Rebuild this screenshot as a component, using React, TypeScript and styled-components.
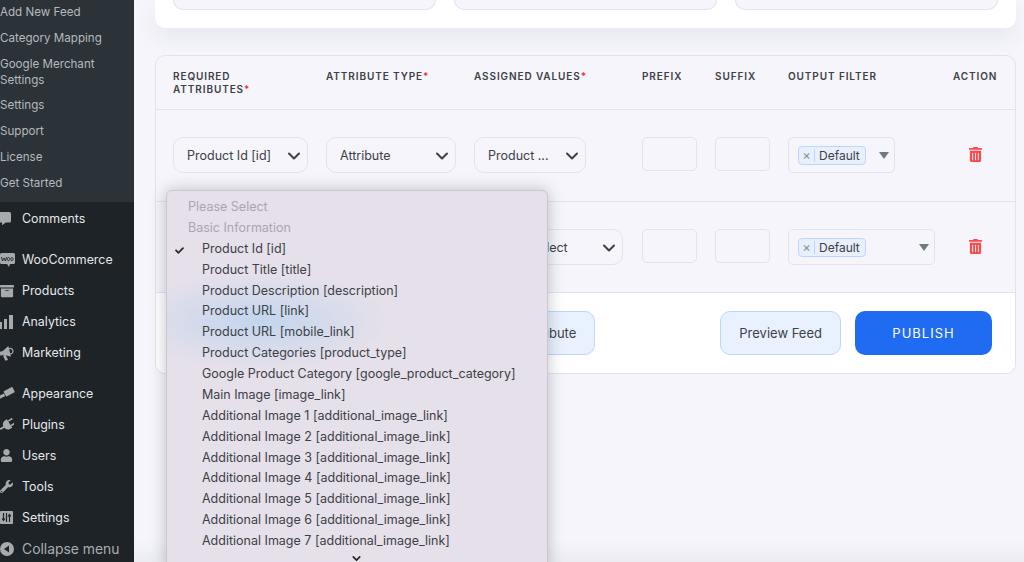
import React from 'react'
import styled, { createGlobalStyle } from 'styled-components'
import { FaTrashAlt, FaCommentAlt, FaArchive, FaUser, FaWrench, FaCheck } from 'react-icons/fa'
import { FiChevronDown } from 'react-icons/fi'

const GlobalStyle = createGlobalStyle`
  html, body { margin: 0; padding: 0; height: 100%; overflow: hidden; }
  body { font-family: Inter, "Noto Sans", sans-serif; background: #f5f5fb; color: #3d4146; }
  * { box-sizing: border-box; }
`

const subItems = ['Add New Feed', 'Category Mapping', 'Google Merchant Settings', 'Settings', 'Support', 'License', 'Get Started']

const BarsIcon = () => (
  <svg width="14" height="14" viewBox="0 0 14 14" fill="currentColor">
    <rect x="0" y="7" width="2" height="7" />
    <rect x="4" y="4" width="3" height="10" />
    <rect x="9" y="0" width="4" height="14" />
  </svg>
)

const WooIcon = () => (
  <svg width="15" height="16" viewBox="0 0 15 16" fill="currentColor">
    <path d="M1.500 1h12A1.500 1.500 0 0 1 15 2.500v8a1.500 1.500 0 0 1-1.500 1.500H10L9 15l-2-3H1.500A1.500 1.500 0 0 1 0 10.500v-8A1.500 1.500 0 0 1 1.500 1z" />
    <path d="M1.500 5l1 4 1.500-3 1.500 3 1-4M8.500 5.500a1.200 1.600 0 1 0 .01 0M12 5.500a1.200 1.600 0 1 0 .01 0" fill="none" stroke="#1d2327" strokeWidth=".9" />
  </svg>
)

const MegaphoneIcon = () => (
  <svg width="14" height="16" viewBox="0 0 14 16" fill="currentColor">
    <g transform="rotate(-14 7 8)">
      <path d="M0 5h3.500L10 1.500v11L3.500 9H0z" />
      <path d="M2.500 9.500h2.800l1 5.500H3.500z" />
      <circle cx="10.500" cy="7" r="2.800" fill="none" stroke="currentColor" strokeWidth="1.200" />
    </g>
  </svg>
)

const RollerIcon = () => (
  <svg width="15" height="14" viewBox="0 0 15 14" fill="currentColor">
    <g transform="rotate(-28 7 7)">
      <rect x="5" y="3" width="10" height="6" rx="1" />
      <rect x="-2" y="5" width="6.500" height="3" />
    </g>
  </svg>
)

const PlugIcon = () => (
  <svg width="14" height="14" viewBox="0 0 14 14" fill="currentColor">
    <g transform="rotate(58 7 7)">
      <rect x="3.500" y="-1" width="1.600" height="5" />
      <rect x="8.900" y="-1" width="1.600" height="5" />
      <path d="M2 4h10v2.500a5 5 0 0 1-4 4.300V15H6v-4.200a5 5 0 0 1-4-4.300z" />
    </g>
  </svg>
)

const SlidersIcon = () => (
  <svg width="13" height="13" viewBox="0 0 13 13">
    <rect width="13" height="13" rx="1" fill="currentColor" />
    <path d="M3.500 2v7M2 7.500l1.500 2 1.500-2M9.500 11V4M8 5.500l1.500-2 1.500 2M6.500 2v9" fill="none" stroke="#1d2327" strokeWidth="1.200" />
  </svg>
)

const CollapseIcon = () => (
  <svg width="14" height="14" viewBox="0 0 14 14">
    <circle cx="7" cy="7" r="7" fill="currentColor" />
    <path d="M9 3.500v7L4 7z" fill="#1d2327" />
  </svg>
)

const CommentIcon = styled(FaCommentAlt)`
  margin-left: -2px;
`

const mainItems: { label: string; icon: React.ReactNode; gap?: boolean; dim?: boolean }[] = [
  { label: 'Comments', icon: <CommentIcon size={13} /> },
  { label: 'WooCommerce', icon: <WooIcon />, gap: true },
  { label: 'Products', icon: <FaArchive size={14} /> },
  { label: 'Analytics', icon: <BarsIcon /> },
  { label: 'Marketing', icon: <MegaphoneIcon /> },
  { label: 'Appearance', icon: <RollerIcon />, gap: true },
  { label: 'Plugins', icon: <PlugIcon /> },
  { label: 'Users', icon: <FaUser size={13} /> },
  { label: 'Tools', icon: <FaWrench size={13} /> },
  { label: 'Settings', icon: <SlidersIcon /> },
  { label: 'Collapse menu', icon: <CollapseIcon />, dim: true },
]

const menuItems = [
  'Product Id [id]',
  'Product Title [title]',
  'Product Description [description]',
  'Product URL [link]',
  'Product URL [mobile_link]',
  'Product Categories [product_type]',
  'Google Product Category [google_product_category]',
  'Main Image [image_link]',
  'Additional Image 1 [additional_image_link]',
  'Additional Image 2 [additional_image_link]',
  'Additional Image 3 [additional_image_link]',
  'Additional Image 4 [additional_image_link]',
  'Additional Image 5 [additional_image_link]',
  'Additional Image 6 [additional_image_link]',
  'Additional Image 7 [additional_image_link]',
]

const Chevron = () => <FiChevronDown size={20} strokeWidth={2.4} />

const Filter = ({ width }: { width: number }) => (
  <FilterBox $width={width}>
    <Chip>
      <ChipClose>×</ChipClose>
      <ChipLabel>Default</ChipLabel>
    </Chip>
    <Caret />
  </FilterBox>
)

type RowProps = { first?: string; second?: string; third: string; thirdWidth: number; filterWidth: number; short?: boolean }

const Row = ({ first, second, third, thirdWidth, filterWidth, short }: RowProps) => (
  <TableRow $short={short}>
    <SelectBox $width={135}>{first}<Chevron /></SelectBox>
    <SelectBox $width={130}>{second}<Chevron /></SelectBox>
    <SelectBox $width={thirdWidth}>{third}<Chevron /></SelectBox>
    <TextBox />
    <TextBox />
    <Filter width={filterWidth} />
    <Trash><FaTrashAlt size={15} /></Trash>
  </TableRow>
)

const App = () => {
  return (
    <Page>
      <GlobalStyle />
      <Sidebar>
        <SubMenu>
          {subItems.map((item) => <SubItem key={item}>{item}</SubItem>)}
        </SubMenu>
        {mainItems.map((item) => (
          <MainItem key={item.label} $gap={item.gap} $dim={item.dim}>
            <IconSlot>{item.icon}</IconSlot>
            {item.label}
          </MainItem>
        ))}
      </Sidebar>
      <Content>
        <TopCard>
          <TopInput />
          <TopInput />
          <TopInput />
        </TopCard>
        <TableCard>
          <TableHead>
            <HeadCell>Required Attributes<Star>*</Star></HeadCell>
            <HeadCell>Attribute Type<Star>*</Star></HeadCell>
            <HeadCell>Assigned Values<Star>*</Star></HeadCell>
            <HeadCell>Prefix</HeadCell>
            <HeadCell>Suffix</HeadCell>
            <HeadCell>Output Filter</HeadCell>
            <HeadCell>Action</HeadCell>
          </TableHead>
          <Row first="Product Id [id]" second="Attribute" third="Product ..." thirdWidth={112} filterWidth={107} />
          <Row third="Please Select" thirdWidth={149} filterWidth={147} short />
          <Footer>
            <GhostButton $push>Add New Attribute</GhostButton>
            <GhostButton>Preview Feed</GhostButton>
            <PublishButton>PUBLISH</PublishButton>
          </Footer>
        </TableCard>
      </Content>
      <BottomShade />
      <Menu>
        <MenuGroup>Please Select</MenuGroup>
        <MenuGroup>Basic Information</MenuGroup>
        {menuItems.map((item, i) => (
          <MenuItem key={item}>
            {i === 0 && <Tick><FaCheck size={9} /></Tick>}
            {item}
          </MenuItem>
        ))}
        <MenuMore><FiChevronDown size={13} strokeWidth={3} /></MenuMore>
      </Menu>
    </Page>
  )
}

export default App

const Page = styled.div`
  position: relative;
  display: flex;
  width: 1024px;
  height: 562px;
  overflow: hidden;
`

const Sidebar = styled.nav`
  width: 134px;
  flex-shrink: 0;
  background: #1d2327;
  color: #eef0f1;
  font-size: 12.4px;
`

const SubMenu = styled.div`
  background: #2c3338;
  height: 202px;
  margin-bottom: 1px;
  color: #b4b9be;
  font-size: 11.6px;
`

const SubItem = styled.div`
  padding: 5px 10px 5px 0;
  line-height: 15.85px;
`

const MainItem = styled.div<{ $gap?: boolean; $dim?: boolean }>`
  display: flex;
  align-items: center;
  height: 31px;
  margin-top: ${(p) => (p.$gap ? '10px' : '0')};
  color: ${(p) => (p.$dim ? '#a9aeb2' : '#e6e8e9')};
  font-size: ${(p) => (p.$dim ? '13.9px' : '12.4px')};
`

const IconSlot = styled.span`
  display: flex;
  justify-content: flex-start;
  width: 22px;
  color: #a7aaad;
`

const Content = styled.main`
  flex: 1;
  min-width: 0;
  padding: 0 8px 0 21px;
`

const TopCard = styled.section`
  display: flex;
  gap: 18px;
  height: 28px;
  padding: 0 18px;
  background: #fff;
  border-radius: 0 0 10px 10px;
  box-shadow: 0 10px 22px rgba(60, 60, 90, 0.07);
`

const TopInput = styled.div`
  flex: 1;
  height: 10px;
  background: #f5f5fb;
  border: 1px solid #e2e3ea;
  border-top: 0;
  border-radius: 0 0 10px 10px;
`

const TableCard = styled.section`
  margin-top: 27px;
  height: 319px;
  border: 1px solid #e2e3ea;
  border-radius: 10px;
  overflow: hidden;
`

const TableHead = styled.div`
  display: grid;
  grid-template-columns: 153px 148px 168px 73px 73px 165px 1fr;
  height: 54px;
  padding: 14px 17px 0;
  border-bottom: 1px solid #e2e3ea;
`

const HeadCell = styled.div`
  font-size: 10px;
  line-height: 13px;
  font-weight: 600;
  letter-spacing: 0.9px;
  text-transform: uppercase;
  color: #3d4146;
  padding-right: 60px;
  &:not(:first-child) { padding-right: 0; white-space: nowrap; }
`

const Star = styled.span`
  color: #f0323c;
`

const TableRow = styled.div<{ $short?: boolean }>`
  display: grid;
  grid-template-columns: 153px 148px 168px 73px 73px 165px 1fr;
  align-items: start;
  height: ${(p) => (p.$short ? '91px' : '92px')};
  padding: 27px 17px 0;
  border-bottom: 1px solid #e2e3ea;
`

const SelectBox = styled.div<{ $width: number }>`
  display: flex;
  align-items: center;
  justify-content: space-between;
  width: ${(p) => p.$width}px;
  height: 36px;
  padding: 1px 3px 0 13px;
  border: 1px solid #e2e3ea;
  border-radius: 10px;
  font-size: 12.5px;
  color: #3d4146;
  white-space: nowrap;
  svg { margin-left: auto; }
`

const TextBox = styled.div`
  width: 55px;
  height: 34px;
  border: 1px solid #e2e3ea;
  border-radius: 5px;
`

const FilterBox = styled.div<{ $width: number }>`
  display: flex;
  align-items: center;
  justify-content: space-between;
  width: ${(p) => p.$width}px;
  height: 36px;
  padding: 0 5px 0 9px;
  border: 1px solid #e2e3ea;
  border-radius: 5px;
`

const Chip = styled.div`
  display: flex;
  align-items: center;
  height: 19px;
  background: #e9f0fd;
  border: 1px solid #bcd6ff;
  border-radius: 4px;
`

const ChipClose = styled.span`
  width: 16px;
  text-align: center;
  font-size: 13px;
  line-height: 13px;
  color: #8b8f96;
  border-right: 1px solid #bcd6ff;
`

const ChipLabel = styled.span`
  padding: 0 5px 0 4px;
  font-size: 12px;
  color: #3d4146;
`

const Caret = styled.span`
  width: 0;
  height: 0;
  border-left: 5px solid transparent;
  border-right: 5px solid transparent;
  border-top: 7px solid #6f7a84;
`

const Trash = styled.div`
  display: flex;
  justify-content: flex-start;
  padding: 10px 0 0 15px;
  color: #fb4a4e;
`

const Footer = styled.div`
  display: flex;
  justify-content: flex-end;
  align-items: flex-start;
  gap: 14px;
  height: 82px;
  padding: 18px 23px 0 0;
  background: #fff;
`

const GhostButton = styled.button<{ $push?: boolean }>`
  height: 44px;
  padding: 0 18px;
  margin-right: ${(p) => (p.$push ? '111px' : '0')};
  background: #e9f1fe;
  border: 1px solid #bcd6fb;
  border-radius: 10px;
  font: 13px Inter, sans-serif;
  color: #3d4146;
`

const PublishButton = styled.button`
  width: 137px;
  height: 44px;
  background: #1f6bf2;
  border: 0;
  border-radius: 10px;
  font: 13px Inter, sans-serif;
  letter-spacing: 1px;
  color: #fff;
`

const BottomShade = styled.div`
  position: absolute;
  left: 134px;
  right: 0;
  bottom: 0;
  height: 22px;
  background: linear-gradient(to bottom, transparent, rgba(60, 60, 80, 0.05));
`

const Menu = styled.div`
  position: absolute;
  top: 190px;
  left: 166px;
  width: 382px;
  height: 380px;
  padding: 6px 0 0;
  background:
    radial-gradient(ellipse 130px 48px at 92px 130px, rgba(170, 205, 240, 0.6), rgba(170, 205, 240, 0.25) 55%, transparent),
    #e5e0ea;
  border: 1px solid #cbc7d0;
  border-radius: 6px;
  box-shadow: 0 0 16px rgba(40, 40, 60, 0.28);
  font-size: 12.5px;
  line-height: 20.88px;
  color: #3d4146;
`

const MenuGroup = styled.div`
  padding-left: 21px;
  color: #aaa6b1;
`

const MenuItem = styled.div`
  position: relative;
  padding-left: 35px;
  white-space: nowrap;
`

const Tick = styled.span`
  position: absolute;
  left: 8px;
  top: 2px;
  color: #2a2d30;
`

const MenuMore = styled.div`
  display: flex;
  justify-content: center;
  margin-left: -1px;
  color: #222;
  line-height: 13px;
`
